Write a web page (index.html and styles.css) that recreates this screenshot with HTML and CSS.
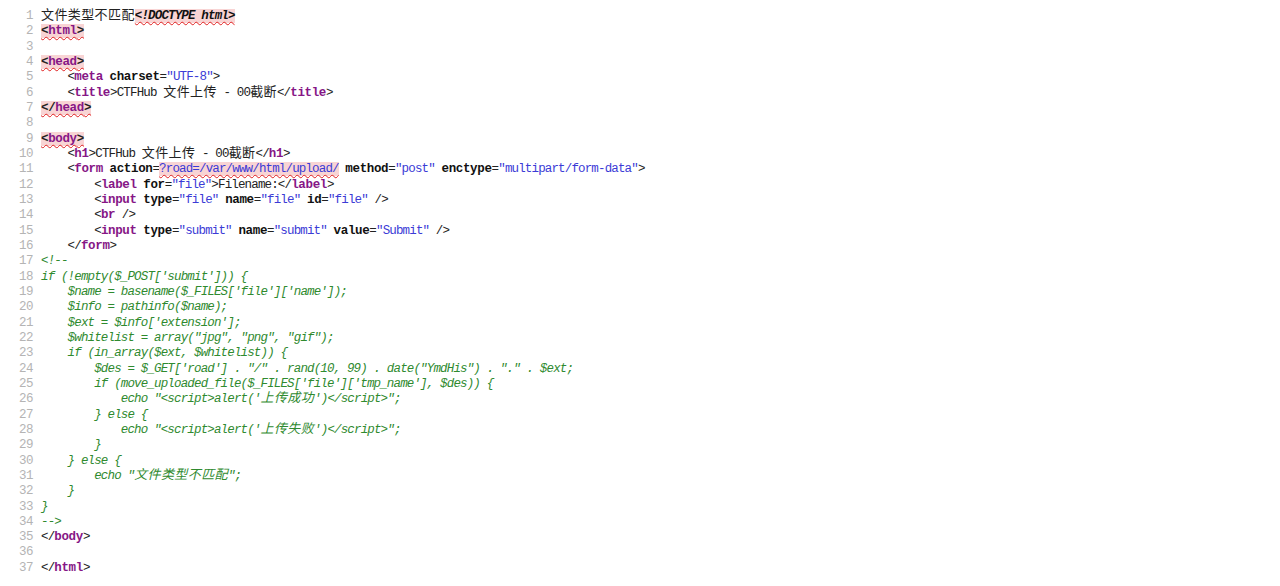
FILE: index.html
```html
<!DOCTYPE html>
<html lang="zh-CN">
<head>
    <meta charset="UTF-8">
    <title>view-source</title>
    <link rel="stylesheet" href="styles.css">
</head>
<body>
    <div class="source">
        <div class="line"><span class="num">1</span><span class="code"><span class="cjk">文件类型不匹配</span><span class="err doctype">&lt;!DOCTYPE html&gt;</span></span></div>
        <div class="line"><span class="num">2</span><span class="code"><span class="err"><b>&lt;</b><span class="tag">html</span><b>&gt;</b></span></span></div>
        <div class="line"><span class="num">3</span><span class="code"></span></div>
        <div class="line"><span class="num">4</span><span class="code"><span class="err"><b>&lt;</b><span class="tag">head</span><b>&gt;</b></span></span></div>
        <div class="line"><span class="num">5</span><span class="code">    &lt;<span class="tag">meta</span> <span class="attr">charset</span>=<span class="val">"UTF-8"</span>&gt;</span></div>
        <div class="line"><span class="num">6</span><span class="code">    &lt;<span class="tag">title</span>&gt;CTFHub <span class="cjk">文件上传</span> - 00<span class="cjk">截断</span>&lt;/<span class="tag">title</span>&gt;</span></div>
        <div class="line"><span class="num">7</span><span class="code"><span class="err"><b>&lt;/</b><span class="tag">head</span><b>&gt;</b></span></span></div>
        <div class="line"><span class="num">8</span><span class="code"></span></div>
        <div class="line"><span class="num">9</span><span class="code"><span class="err"><b>&lt;</b><span class="tag">body</span><b>&gt;</b></span></span></div>
        <div class="line"><span class="num">10</span><span class="code">    &lt;<span class="tag">h1</span>&gt;CTFHub <span class="cjk">文件上传</span> - 00<span class="cjk">截断</span>&lt;/<span class="tag">h1</span>&gt;</span></div>
        <div class="line"><span class="num">11</span><span class="code">    &lt;<span class="tag">form</span> <span class="attr">action</span>=<span class="err val">?road=/var/www/html/upload/</span> <span class="attr">method</span>=<span class="val">"post"</span> <span class="attr">enctype</span>=<span class="val">"multipart/form-data"</span>&gt;</span></div>
        <div class="line"><span class="num">12</span><span class="code">        &lt;<span class="tag">label</span> <span class="attr">for</span>=<span class="val">"file"</span>&gt;Filename:&lt;/<span class="tag">label</span>&gt;</span></div>
        <div class="line"><span class="num">13</span><span class="code">        &lt;<span class="tag">input</span> <span class="attr">type</span>=<span class="val">"file"</span> <span class="attr">name</span>=<span class="val">"file"</span> <span class="attr">id</span>=<span class="val">"file"</span> /&gt;</span></div>
        <div class="line"><span class="num">14</span><span class="code">        &lt;<span class="tag">br</span> /&gt;</span></div>
        <div class="line"><span class="num">15</span><span class="code">        &lt;<span class="tag">input</span> <span class="attr">type</span>=<span class="val">"submit"</span> <span class="attr">name</span>=<span class="val">"submit"</span> <span class="attr">value</span>=<span class="val">"Submit"</span> /&gt;</span></div>
        <div class="line"><span class="num">16</span><span class="code">    &lt;/<span class="tag">form</span>&gt;</span></div>
        <div class="line"><span class="num">17</span><span class="code comment">&lt;!--</span></div>
        <div class="line"><span class="num">18</span><span class="code comment">if (!empty($_POST['submit'])) {</span></div>
        <div class="line"><span class="num">19</span><span class="code comment">    $name = basename($_FILES['file']['name']);</span></div>
        <div class="line"><span class="num">20</span><span class="code comment">    $info = pathinfo($name);</span></div>
        <div class="line"><span class="num">21</span><span class="code comment">    $ext = $info['extension'];</span></div>
        <div class="line"><span class="num">22</span><span class="code comment">    $whitelist = array("jpg", "png", "gif");</span></div>
        <div class="line"><span class="num">23</span><span class="code comment">    if (in_array($ext, $whitelist)) {</span></div>
        <div class="line"><span class="num">24</span><span class="code comment">        $des = $_GET['road'] . "/" . rand(10, 99) . date("YmdHis") . "." . $ext;</span></div>
        <div class="line"><span class="num">25</span><span class="code comment">        if (move_uploaded_file($_FILES['file']['tmp_name'], $des)) {</span></div>
        <div class="line"><span class="num">26</span><span class="code comment">            echo "&lt;script&gt;alert('<span class="cjk">上传成功</span>')&lt;/script&gt;";</span></div>
        <div class="line"><span class="num">27</span><span class="code comment">        } else {</span></div>
        <div class="line"><span class="num">28</span><span class="code comment">            echo "&lt;script&gt;alert('<span class="cjk">上传失败</span>')&lt;/script&gt;";</span></div>
        <div class="line"><span class="num">29</span><span class="code comment">        }</span></div>
        <div class="line"><span class="num">30</span><span class="code comment">    } else {</span></div>
        <div class="line"><span class="num">31</span><span class="code comment">        echo "<span class="cjk">文件类型不匹配</span>";</span></div>
        <div class="line"><span class="num">32</span><span class="code comment">    }</span></div>
        <div class="line"><span class="num">33</span><span class="code comment">}</span></div>
        <div class="line"><span class="num">34</span><span class="code comment">--&gt;</span></div>
        <div class="line"><span class="num">35</span><span class="code">&lt;/<span class="tag">body</span>&gt;</span></div>
        <div class="line"><span class="num">36</span><span class="code"></span></div>
        <div class="line"><span class="num">37</span><span class="code">&lt;/<span class="tag">html</span>&gt;</span></div>
    </div>
</body>
</html>
```

FILE: styles.css
```css
body {
    margin: 0;
    background-color: #fff;
    color: #222;
    font-family: "Liberation Mono", "Noto Sans CJK SC", monospace;
    font-size: 12.5px;
    letter-spacing: -0.85px;
}

.source {
    padding-top: 9px;
}

.line {
    display: flex;
    height: 15.33px;
    line-height: 15.33px;
}

.num {
    width: 33px;
    padding-right: 8px;
    flex-shrink: 0;
    text-align: right;
    color: #b4b4b4;
    letter-spacing: -0.5px;
}

.code {
    white-space: pre;
}

.cjk {
    font-family: "Noto Sans CJK SC", sans-serif;
    font-size: 13px;
    line-height: 10px;
    letter-spacing: 0.4px;
}

b,
.tag,
.attr {
    letter-spacing: -0.35px;
}

.tag {
    color: #861686;
    font-weight: bold;
}

.attr {
    color: #111;
    font-weight: bold;
}

.val {
    color: #3b3bd6;
}

.comment {
    color: #2f8a2f;
    font-style: italic;
}

.doctype {
    color: #111;
    font-weight: bold;
    font-style: italic;
}

.err {
    background-color: #f8d4d4;
    text-decoration: underline wavy #e02020;
    text-decoration-thickness: 1px;
    text-decoration-skip-ink: none;
    text-underline-offset: 2px;
}
```
